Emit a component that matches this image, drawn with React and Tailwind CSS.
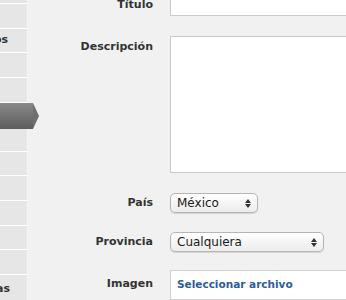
import React from "react";

const font = { fontFamily: '"DejaVu Sans", "Liberation Sans", sans-serif' };

function SideRow({ text, active }) {
  if (active) {
    return (
      <div className="relative h-[26px] w-[28px]">
        <div className="absolute left-0 top-0 h-[26px] w-[33px] bg-gradient-to-b from-[#8a8a8a] to-[#5c5c5c]" />
        <div className="absolute left-[33px] top-0 h-0 w-0 border-y-[13px] border-l-[6px] border-y-transparent border-l-[#6f6f6f]" />
      </div>
    );
  }
  return (
    <div className="h-[26px] border-b border-white flex items-center text-[11px] font-bold text-[#333] overflow-hidden whitespace-nowrap">
      <span className="-ml-[6px]">{text}</span>
    </div>
  );
}

function Select({ value, width }) {
  return (
    <div
      className={`${width} h-[20px] rounded-[5px] border border-[#b5b5b5] bg-gradient-to-b from-white to-[#ececec] shadow-[0_1px_1px_rgba(0,0,0,0.12)] flex items-center justify-between pl-[6px] pr-[6px]`}
    >
      <span className="text-[12px] text-[#1a1a1a] leading-none">{value}</span>
      <span className="flex flex-col items-center gap-[1px]">
        <span className="w-0 h-0 border-x-[3px] border-b-[4px] border-x-transparent border-b-[#333]" />
        <span className="w-0 h-0 border-x-[3px] border-t-[4px] border-x-transparent border-t-[#333]" />
      </span>
    </div>
  );
}

export default function App() {
  return (
    <div className="w-[346px] h-[300px] overflow-hidden flex bg-[#f1f1f1]" style={font}>
      <div className="w-[28px] shrink-0 bg-[#e6e6e6] relative z-10 flex flex-col pt-[3px] border-r border-[#f6f6f6]">
        <div className="h-[1px] bg-white" />
        <SideRow text="" />
        <SideRow text="os" />
        <SideRow text="" />
        <SideRow text="" />
        <SideRow active />
        <SideRow text="" />
        <SideRow text="" />
        <SideRow text="" />
        <SideRow text="" />
        <SideRow text="" />
        <SideRow text="" />
        <div className="h-[26px] text-[11px] font-bold text-[#333] whitespace-nowrap pt-[6px]">
          <span className="-ml-[4px]">as</span>
        </div>
      </div>
      <div className="flex-1 flex flex-col">
        <div className="flex mt-[-10px]">
          <div className="w-[142px] shrink-0 text-right pr-[17px] pt-[7px] text-[11px] font-bold text-[#333]">Título</div>
          <div className="flex-1 h-[26px] bg-white border border-[#c9c9c9] border-r-0" />
        </div>
        <div className="flex mt-[20px]">
          <div className="w-[142px] shrink-0 text-right pr-[17px] pt-[3px] text-[11px] font-bold text-[#333]">Descripción</div>
          <div className="flex-1 h-[137px] bg-white border border-[#c9c9c9] border-r-0" />
        </div>
        <div className="flex items-center mt-[20px] h-[20px]">
          <div className="w-[142px] shrink-0 text-right pr-[17px] text-[11px] font-bold text-[#333]">País</div>
          <Select value="México" width="w-[88px]" />
        </div>
        <div className="flex items-center mt-[19px] h-[21px]">
          <div className="w-[142px] shrink-0 text-right pr-[17px] text-[11px] font-bold text-[#333]">Provincia</div>
          <Select value="Cualquiera" width="w-[154px]" />
        </div>
        <div className="flex mt-[18px]">
          <div className="w-[142px] shrink-0 text-right pr-[17px] pt-[6px] text-[11px] font-bold text-[#333]">Imagen</div>
          <div className="flex-1 h-[30px] bg-white border border-[#d0d0d0] border-r-0 flex items-center pl-[6px]">
            <span className="text-[10.5px] font-bold text-[#2b5d9b] whitespace-nowrap">Seleccionar archivo</span>
          </div>
        </div>
      </div>
    </div>
  );
}
